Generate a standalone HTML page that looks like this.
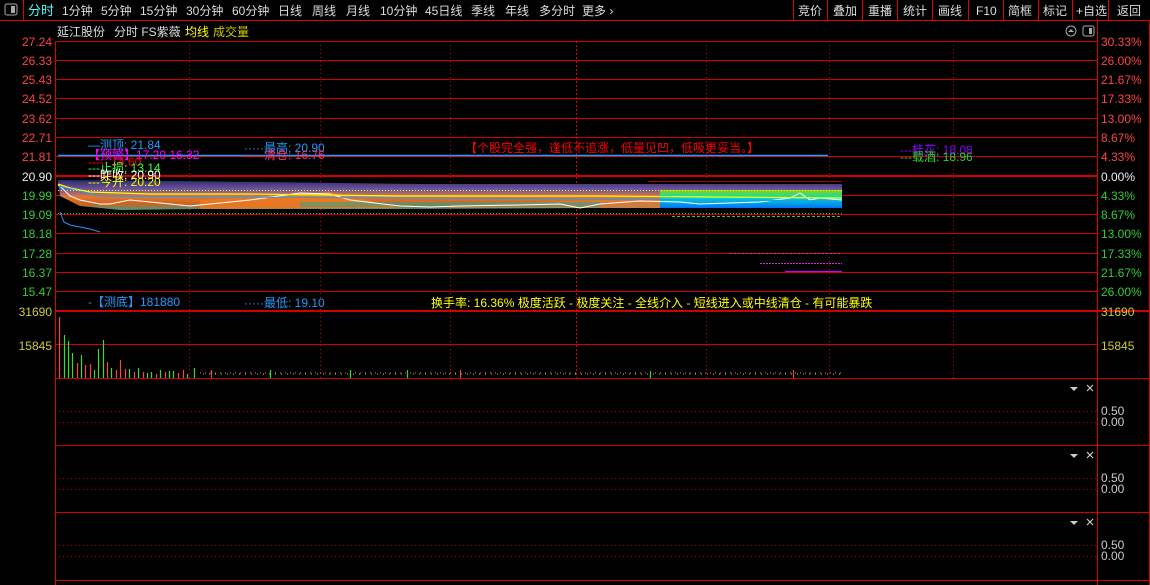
<!DOCTYPE html><html><head><meta charset="utf-8"><style>
body{margin:0;background:#000;width:1150px;height:585px;overflow:hidden;font-family:"Liberation Sans","Noto Sans CJK SC",sans-serif}
svg{display:block}
text{font-family:"Liberation Sans","Noto Sans CJK SC",sans-serif;font-size:12px}
</style></head><body>
<svg width="1150" height="585" viewBox="0 0 1150 585">
<defs>
<linearGradient id="g1" x1="0" y1="0" x2="0" y2="1"><stop offset="0" stop-color="#2a2a6a"/><stop offset=".35" stop-color="#7a5aa0"/><stop offset=".55" stop-color="#e07a30"/><stop offset=".8" stop-color="#d06020"/><stop offset="1" stop-color="#40a080"/></linearGradient>
<linearGradient id="g2" x1="0" y1="0" x2="0" y2="1"><stop offset="0" stop-color="#9acd00"/><stop offset=".4" stop-color="#00e0c0"/><stop offset="1" stop-color="#0070ff"/></linearGradient>
</defs>
<!-- toolbar -->
<line x1="0" y1="20.5" x2="1150" y2="20.5" stroke="#e00000"/>
<rect x="5" y="4" width="12" height="11" rx="2" fill="none" stroke="#aaa"/><rect x="11" y="6" width="4" height="7" fill="#aaa"/>
<line x1="23.5" y1="0" x2="23.5" y2="20" stroke="#e00000"/>
<g fill="#ddd" font-size="12">
<text x="28" y="15" fill="#4ff" style="font-size:13px">分时</text>
<text x="62" y="15">1分钟</text><text x="101" y="15">5分钟</text><text x="140" y="15">15分钟</text>
<text x="186" y="15">30分钟</text><text x="232" y="15">60分钟</text><text x="278" y="15">日线</text>
<text x="312" y="15">周线</text><text x="346" y="15">月线</text><text x="380" y="15">10分钟</text>
<text x="425" y="15">45日线</text><text x="471" y="15">季线</text><text x="505" y="15">年线</text>
<text x="539" y="15">多分时</text><text x="582" y="15">更多 ›</text>
<text x="798" y="15">竞价</text><text x="833" y="15">叠加</text><text x="868" y="15">重播</text>
<text x="903" y="15">统计</text><text x="938" y="15">画线</text><text x="976" y="15">F10</text>
<text x="1008" y="15">简框</text><text x="1043" y="15">标记</text><text x="1076" y="15">+自选</text><text x="1117" y="15">返回</text>
</g>
<g stroke="#e00000"><line x1="793.5" y1="0" x2="793.5" y2="20"/><line x1="827.5" y1="0" x2="827.5" y2="20"/><line x1="862.5" y1="0" x2="862.5" y2="20"/><line x1="897.5" y1="0" x2="897.5" y2="20"/><line x1="932.5" y1="0" x2="932.5" y2="20"/><line x1="968.5" y1="0" x2="968.5" y2="20"/><line x1="1003.5" y1="0" x2="1003.5" y2="20"/><line x1="1038.5" y1="0" x2="1038.5" y2="20"/><line x1="1072.5" y1="0" x2="1072.5" y2="20"/><line x1="1108.5" y1="0" x2="1108.5" y2="20"/></g>
<!-- title -->
<text x="57" y="36" fill="#ddd">延江股份</text><text x="114" y="36" fill="#ddd">分时 FS紫薇</text>
<text x="185" y="36" fill="#ff0">均线</text><text x="213" y="36" fill="#cc0">成交量</text>
<circle cx="1071" cy="31" r="5" fill="none" stroke="#aaa"/><path d="M1068 32l3-3 3 3z" fill="#aaa"/>
<rect x="1083" y="26" width="11" height="10" rx="2" fill="none" stroke="#aaa"/><rect x="1089" y="28" width="3" height="6" fill="#aaa"/>
<!-- frame -->
<rect x="55" y="41" width="1" height="544" fill="#e00000"/>
<rect x="1097" y="21" width="1" height="564" fill="#e00000"/>
<rect x="1149" y="21" width="1" height="564" fill="#e00000"/>
<g fill="#d00000">
<rect x="55" y="41" width="1042" height="1"/><rect x="55" y="60" width="1042" height="1"/><rect x="55" y="79" width="1042" height="1"/><rect x="55" y="98" width="1042" height="1"/><rect x="55" y="118" width="1042" height="1"/><rect x="55" y="137" width="1042" height="1"/><rect x="55" y="156" width="1042" height="1"/><rect x="55" y="175" width="1042" height="2"/><rect x="55" y="195" width="1042" height="1"/><rect x="55" y="214" width="1042" height="1"/><rect x="55" y="233" width="1042" height="1"/><rect x="55" y="253" width="1042" height="1"/><rect x="55" y="272" width="1042" height="1"/><rect x="55" y="291" width="1042" height="1"/>
<rect x="55" y="310" width="1095" height="2"/><rect x="55" y="344" width="1042" height="1"/><rect x="55" y="378" width="1095" height="1"/>
<rect x="55" y="445" width="1095" height="1"/><rect x="55" y="512" width="1095" height="1"/><rect x="55" y="580" width="1095" height="1"/>
</g>
<g stroke="#e00000" stroke-dasharray="1 3">
<line x1="189.5" y1="41" x2="189.5" y2="378"/><line x1="320.5" y1="41" x2="320.5" y2="378"/><line x1="450.5" y1="41" x2="450.5" y2="378"/><line x1="706.5" y1="41" x2="706.5" y2="378"/><line x1="829.5" y1="41" x2="829.5" y2="378"/><line x1="953.5" y1="41" x2="953.5" y2="378"/>
<line x1="55" y1="411.5" x2="1097" y2="411.5"/><line x1="55" y1="422.5" x2="1097" y2="422.5"/>
<line x1="55" y1="478.5" x2="1097" y2="478.5"/><line x1="55" y1="489.5" x2="1097" y2="489.5"/>
<line x1="55" y1="545.5" x2="1097" y2="545.5"/><line x1="55" y1="556.5" x2="1097" y2="556.5"/>
</g>
<line x1="576.5" y1="41" x2="576.5" y2="378" stroke="#e00000" stroke-dasharray="2 2"/>
<!-- left axis -->
<g text-anchor="end" font-size="12">
<text x="52" y="46" fill="#f44">27.24</text><text x="52" y="65" fill="#f44">26.33</text><text x="52" y="84" fill="#f44">25.43</text><text x="52" y="103" fill="#f44">24.52</text><text x="52" y="123" fill="#f44">23.62</text><text x="52" y="142" fill="#f44">22.71</text><text x="52" y="161" fill="#f44">21.81</text>
<text x="52" y="181" fill="#eee">20.90</text>
<text x="52" y="200" fill="#3c3">19.99</text><text x="52" y="219" fill="#3c3">19.09</text><text x="52" y="238" fill="#3c3">18.18</text><text x="52" y="258" fill="#3c3">17.28</text><text x="52" y="277" fill="#3c3">16.37</text><text x="52" y="296" fill="#3c3">15.47</text>
<text x="52" y="316" fill="#cc3">31690</text><text x="52" y="350" fill="#cc3">15845</text>
</g>
<g font-size="12">
<text x="1101" y="46" fill="#f44">30.33%</text><text x="1101" y="65" fill="#f44">26.00%</text><text x="1101" y="84" fill="#f44">21.67%</text><text x="1101" y="103" fill="#f44">17.33%</text><text x="1101" y="123" fill="#f44">13.00%</text><text x="1101" y="142" fill="#f44">8.67%</text><text x="1101" y="161" fill="#f44">4.33%</text>
<text x="1101" y="181" fill="#eee">0.00%</text>
<text x="1101" y="200" fill="#3c3">4.33%</text><text x="1101" y="219" fill="#3c3">8.67%</text><text x="1101" y="238" fill="#3c3">13.00%</text><text x="1101" y="258" fill="#3c3">17.33%</text><text x="1101" y="277" fill="#3c3">21.67%</text><text x="1101" y="296" fill="#3c3">26.00%</text>
<text x="1101" y="316" fill="#cc3">31690</text><text x="1101" y="350" fill="#cc3">15845</text>
<text x="1101" y="415" fill="#ccc">0.50</text><text x="1101" y="426" fill="#ccc">0.00</text>
<text x="1101" y="482" fill="#ccc">0.50</text><text x="1101" y="493" fill="#ccc">0.00</text>
<text x="1101" y="549" fill="#ccc">0.50</text><text x="1101" y="560" fill="#ccc">0.00</text>
</g>
<!-- chart fill -->
<path d="M58 180 L180 181 L420 184 L842 184 L842 208 L600 208 L400 209 L300 209 L200 209 L120 210 L80 206 L60 196Z" fill="url(#g1)"/>
<path d="M200 200 L330 192 L360 198 L400 208 L200 209Z" fill="#f07a20" opacity=".8"/>
<path d="M450 205 L600 200 L680 198 L680 208 L450 208Z" fill="#e08040" opacity=".7"/>
<path d="M300 202 L600 202 L600 207 L300 207Z" fill="#3aa080" opacity=".6"/>
<path d="M660 190 H842 V208 H660Z" fill="url(#g2)"/>
<path d="M58 185 L62 188 L70 196 L80 200 L90 202 L100 204 L110 204 L130 200 L150 202 L170 204 L190 206 L210 204 L250 200 L300 193 L330 194 L350 200 L400 206 L430 207 L460 206 L520 205 L560 204 L580 208 L600 204 L640 201 L680 202 L700 204 L760 202 L790 198 L800 193 L810 200 L820 198 L842 200" fill="none" stroke="#fff" stroke-width="1"/>
<path d="M58 184 L70 188 L90 192 L150 194 L250 194 L400 196 L600 196 L842 198" fill="none" stroke="#ff0" stroke-width="1.2"/>
<path d="M58 186 L75 190 L100 196 L200 197 L400 198 L600 199 L842 201" fill="none" stroke="#29f" stroke-width="1"/>
<path d="M60 212 L64 222 L70 225 L80 227 L90 229 L100 232" fill="none" stroke="#29f"/>
<line x1="58" y1="190.5" x2="842" y2="190.5" stroke="#ff0" stroke-dasharray="1 2"/>
<line x1="58" y1="213.5" x2="842" y2="213.5" stroke="#3c3" stroke-dasharray="1 2"/>
<line x1="672" y1="216.5" x2="842" y2="216.5" stroke="#3c3" stroke-dasharray="3 2"/>
<line x1="648" y1="181.5" x2="842" y2="181.5" stroke="#a00"/>
<line x1="730" y1="253.5" x2="842" y2="253.5" stroke="#c3c" stroke-dasharray="2 2"/>
<line x1="760" y1="263.5" x2="842" y2="263.5" stroke="#c3c" stroke-dasharray="2 1"/>
<line x1="785" y1="271.5" x2="842" y2="271.5" stroke="#c0f"/>
<line x1="58" y1="155.5" x2="828" y2="155.5" stroke="#29f" stroke-width="1.5"/>
<!-- labels -->
<g font-size="12">
<text x="88" y="149" fill="#29f">—测顶: 21.84</text>
<text x="88" y="159" fill="#f0f">【预警】17.20 16.32</text>
<text x="88" y="166" fill="#f00">----- 14.60</text>
<text x="88" y="172" fill="#3f3">---止损: 13.14</text>
<text x="88" y="179" fill="#fff">---昨收: 20.90</text>
<text x="88" y="186" fill="#ff0">---今开: 20.20</text>
<text x="244" y="152" fill="#29f">·····最高: 20.90</text>
<text x="244" y="159" fill="#f36">-----清仓: 16.76</text>
<text x="465" y="152" fill="#f00">【个股完全强，逢低不追涨，低量见凹，低吸更妥当。】</text>
<text x="900" y="154" fill="#80f">---桂花: 18.08</text>
<text x="900" y="161" fill="#3c3">---载酒: 18.96</text>
<text x="88" y="306" fill="#29f">-【测底】181880</text>
<text x="244" y="307" fill="#29f">·····最低: 19.10</text>
<text x="431" y="307" fill="#ff0">换手率: 16.36%  极度活跃 - 极度关注 - 全线介入 - 短线进入或中线清仓 - 有可能暴跌</text>
</g>
<!-- volume bars -->
<g stroke-width="1.2">
<line x1="59.5" y1="317" x2="59.5" y2="378" stroke="#f44"/><line x1="64.5" y1="335" x2="64.5" y2="378" stroke="#3d3"/><line x1="68.5" y1="341" x2="68.5" y2="378" stroke="#3d3"/><line x1="72.5" y1="353" x2="72.5" y2="378" stroke="#3d3"/><line x1="77.5" y1="363" x2="77.5" y2="378" stroke="#f44"/><line x1="81.5" y1="355" x2="81.5" y2="378" stroke="#3d3"/><line x1="85.5" y1="365" x2="85.5" y2="378" stroke="#f44"/><line x1="90.5" y1="364" x2="90.5" y2="378" stroke="#f44"/><line x1="94.5" y1="370" x2="94.5" y2="378" stroke="#3d3"/><line x1="98.5" y1="349" x2="98.5" y2="378" stroke="#3d3"/><line x1="103.5" y1="340" x2="103.5" y2="378" stroke="#3d3"/><line x1="107.5" y1="362" x2="107.5" y2="378" stroke="#f44"/><line x1="111.5" y1="368" x2="111.5" y2="378" stroke="#3d3"/><line x1="116.5" y1="370" x2="116.5" y2="378" stroke="#f44"/><line x1="120.5" y1="360" x2="120.5" y2="378" stroke="#f44"/><line x1="125.5" y1="369" x2="125.5" y2="378" stroke="#f44"/><line x1="129.5" y1="369" x2="129.5" y2="378" stroke="#3d3"/><line x1="134.5" y1="372" x2="134.5" y2="378" stroke="#f44"/><line x1="138.5" y1="368" x2="138.5" y2="378" stroke="#3d3"/><line x1="143.5" y1="372" x2="143.5" y2="378" stroke="#f44"/><line x1="147.5" y1="373" x2="147.5" y2="378" stroke="#3d3"/><line x1="151.5" y1="372" x2="151.5" y2="378" stroke="#3d3"/><line x1="156.5" y1="374" x2="156.5" y2="378" stroke="#f44"/><line x1="160.5" y1="370" x2="160.5" y2="378" stroke="#3d3"/><line x1="165.5" y1="372" x2="165.5" y2="378" stroke="#f44"/><line x1="169.5" y1="371" x2="169.5" y2="378" stroke="#3d3"/><line x1="173.5" y1="371" x2="173.5" y2="378" stroke="#3d3"/><line x1="178.5" y1="373" x2="178.5" y2="378" stroke="#f44"/><line x1="183.5" y1="370" x2="183.5" y2="378" stroke="#f44"/><line x1="187.5" y1="374" x2="187.5" y2="378" stroke="#3d3"/><line x1="194.5" y1="368" x2="194.5" y2="378" stroke="#3d3"/>
</g>
<g stroke="#f44" stroke-dasharray="1 4" stroke-width="1.2"><line x1="200" y1="373" x2="842" y2="373"/></g>
<g stroke="#3d3" stroke-dasharray="1 5" stroke-width="1.2"><line x1="203" y1="374" x2="842" y2="374"/></g>
<g stroke-width="1.2"><line x1="211.5" y1="370" x2="211.5" y2="378" stroke="#f44"/><line x1="270.5" y1="370" x2="270.5" y2="378" stroke="#3d3"/><line x1="350.5" y1="370" x2="350.5" y2="378" stroke="#3d3"/><line x1="407.5" y1="370" x2="407.5" y2="378" stroke="#3d3"/><line x1="460.5" y1="370" x2="460.5" y2="378" stroke="#f44"/><line x1="650.5" y1="371" x2="650.5" y2="378" stroke="#3d3"/><line x1="793.5" y1="370" x2="793.5" y2="378" stroke="#f44"/></g>
<!-- subpanel icons -->
<g fill="#ccc"><path d="M1070 387h8l-4 4z"/><path d="M1070 454h8l-4 4z"/><path d="M1070 521h8l-4 4z"/></g>
<g stroke="#ccc" stroke-width="1.2"><path d="M1087 385l6 6M1093 385l-6 6"/><path d="M1087 452l6 6M1093 452l-6 6"/><path d="M1087 519l6 6M1093 519l-6 6"/></g>
</svg>
</body></html>
